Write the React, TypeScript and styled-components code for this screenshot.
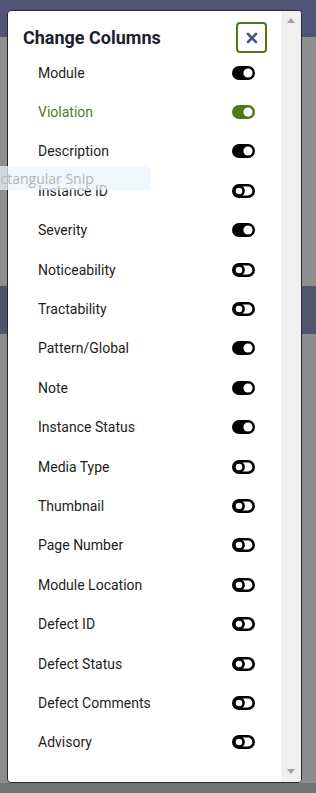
import React from "react";
import styled, { createGlobalStyle } from "styled-components";

const GlobalStyle = createGlobalStyle`
  html, body {
    margin: 0;
    padding: 0;
    background: #8d8d8d;
    font-family: Roboto, "Liberation Sans", sans-serif;
  }
`;

const columns: { label: string; on: boolean; active?: boolean }[] = [
  { label: "Module", on: true },
  { label: "Violation", on: true, active: true },
  { label: "Description", on: true },
  { label: "Instance ID", on: false },
  { label: "Severity", on: true },
  { label: "Noticeability", on: false },
  { label: "Tractability", on: false },
  { label: "Pattern/Global", on: true },
  { label: "Note", on: true },
  { label: "Instance Status", on: true },
  { label: "Media Type", on: false },
  { label: "Thumbnail", on: false },
  { label: "Page Number", on: false },
  { label: "Module Location", on: false },
  { label: "Defect ID", on: false },
  { label: "Defect Status", on: false },
  { label: "Defect Comments", on: false },
  { label: "Advisory", on: false },
];

const Backdrop = styled.div`
  position: relative;
  width: 316px;
  height: 793px;
  overflow: hidden;
  display: flex;
  flex-direction: column;
  background: #8e8e8e;
`;

const Band = styled.div<{ h: number; tone: string }>`
  height: ${(p) => p.h}px;
  flex-shrink: 0;
  background: ${(p) => p.tone};
`;

const Modal = styled.div`
  position: absolute;
  left: 7px;
  top: 10px;
  width: 293px;
  height: 771px;
  display: flex;
  background: #ffffff;
  border: 1px solid #26262e;
  border-radius: 4px;
  overflow: hidden;
`;

const Content = styled.div`
  flex: 1;
  display: flex;
  flex-direction: column;
  padding: 11px 0 0 15px;
`;

const Header = styled.div`
  display: flex;
  align-items: center;
  justify-content: space-between;
  padding-right: 14px;
`;

const Title = styled.h2`
  margin: 0;
  font-size: 18px;
  font-weight: 700;
  color: #1c1d2e;
`;

const CloseButton = styled.button`
  width: 31px;
  height: 31px;
  padding: 0;
  display: flex;
  align-items: center;
  justify-content: center;
  background: #ffffff;
  border: 2px solid #4a7b1b;
  border-radius: 4px;
`;

const List = styled.div`
  display: flex;
  flex-direction: column;
  padding: 0 26px 0 15px;
`;

const Row = styled.div`
  height: 39.4px;
  display: flex;
  align-items: center;
  justify-content: space-between;
`;

const Label = styled.span<{ active?: boolean }>`
  font-size: 14px;
  color: ${(p) => (p.active ? "#4d7d1f" : "#1e1e22")};
`;

const ScrollTrack = styled.div`
  width: 20px;
  background: #f0f0f0;
  display: flex;
  flex-direction: column;
  justify-content: space-between;
  align-items: center;
  padding: 7px 0 8px;
`;

const Arrow = styled.div<{ down?: boolean }>`
  width: 0;
  height: 0;
  border-left: 4.5px solid transparent;
  border-right: 4.5px solid transparent;
  ${(p) =>
    p.down ? "border-top: 5px solid #a3a3a3;" : "border-bottom: 5px solid #a3a3a3;"}
`;

// leftover "Rectangular Snip" tooltip from the screen capture tool
const SnipTip = styled.div`
  position: absolute;
  left: 0;
  top: 166px;
  width: 150px;
  height: 24px;
  background: rgba(236, 245, 252, 0.72);
  overflow: hidden;
  display: flex;
  align-items: center;
`;

const SnipText = styled.span`
  margin-left: -16px;
  font-family: "Open Sans", "Liberation Sans", sans-serif;
  font-size: 14px;
  color: #b4b4b8;
  white-space: nowrap;
`;

const Toggle: React.FC<{ on: boolean; color: string }> = ({ on, color }) =>
  on ? (
    <svg width="23" height="14" viewBox="0 0 23 14">
      <rect x="0" y="0" width="23" height="14" rx="7" fill={color} />
      <circle cx="16" cy="7" r="4.6" fill="#ffffff" />
    </svg>
  ) : (
    <svg width="23" height="14" viewBox="0 0 23 14">
      <rect
        x="1.3"
        y="1.3"
        width="20.4"
        height="11.4"
        rx="5.7"
        fill="none"
        stroke={color}
        strokeWidth="2.6"
      />
      <circle cx="7" cy="7" r="4.6" fill="#ffffff" stroke={color} strokeWidth="2.6" />
    </svg>
  );

const App: React.FC = () => {
  return (
    <>
      <GlobalStyle />
      <Backdrop>
        <Band h={37} tone="#4f5574" />
        <Band h={249} tone="#8f8f8f" />
        <Band h={48} tone="#50556f" />
        <Band h={449} tone="#8c8c8c" />
        <Band h={10} tone="#727272" />

        <Modal>
          <Content>
            <Header>
              <Title>Change Columns</Title>
              <CloseButton aria-label="Close">
                <svg width="12" height="12" viewBox="0 0 12 12">
                  <path
                    d="M2 2 L10 10 M10 2 L2 10"
                    stroke="#4b5587"
                    strokeWidth="2.6"
                    strokeLinecap="round"
                  />
                </svg>
              </CloseButton>
            </Header>
            <List>
              {columns.map((c) => (
                <Row key={c.label}>
                  <Label active={c.active}>{c.label}</Label>
                  <Toggle on={c.on} color={c.active ? "#4a7b16" : "#000000"} />
                </Row>
              ))}
            </List>
          </Content>
          <ScrollTrack>
            <Arrow />
            <Arrow down />
          </ScrollTrack>
        </Modal>

        <SnipTip>
          <SnipText>Rectangular Snip</SnipText>
        </SnipTip>
      </Backdrop>
    </>
  );
};

export default App;
